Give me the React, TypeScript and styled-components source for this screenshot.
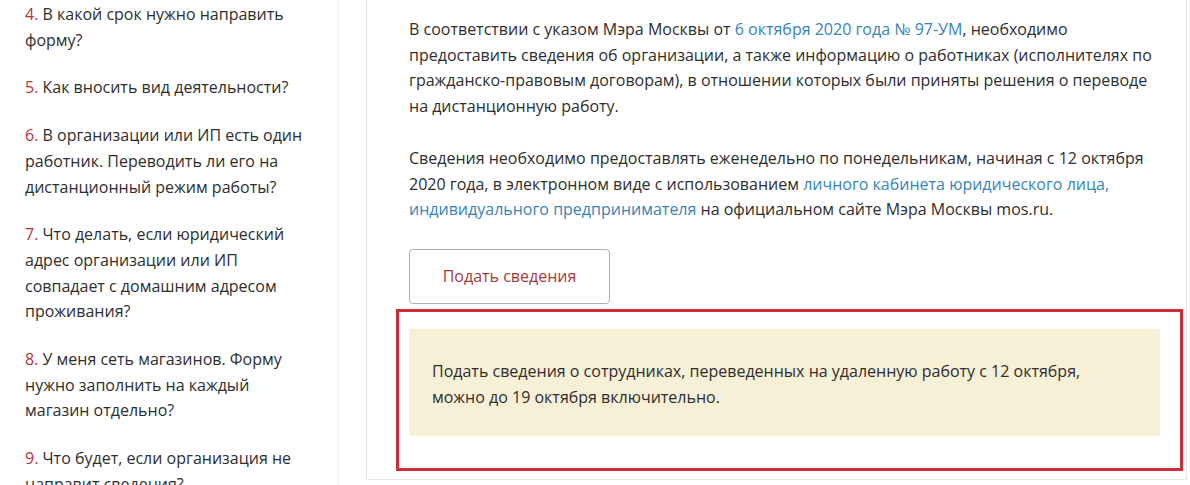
import React from 'react';
import styled, { createGlobalStyle } from 'styled-components';

const GlobalStyle = createGlobalStyle`
  body {
    margin: 0;
    background: #fff;
    font-family: 'Open Sans', 'Liberation Sans', sans-serif;
    color: #2e2e2e;
  }
`;

// Styles
const Page = styled.div`
  display: flex;
  align-items: flex-start;
  height: 485px;
  overflow: hidden;
`;

const Sidebar = styled.aside`
  width: 313px;
  height: 485px;
  padding: 2px 0 0 25px;
  border-right: 1px solid #ececec;
  flex-shrink: 0;
`;

const Question = styled.div`
  width: 285px;
  font-size: 16px;
  line-height: 25.7px;
  margin-bottom: 22px;

  b {
    font-weight: normal;
    color: #b8323a;
  }
`;

const Card = styled.section`
  margin-left: 27px;
  width: 777px;
  padding: 17px 0 0 42px;
  height: 462px;
  border: 1px solid #e6e6e6;
  border-top: none;
`;

const Text = styled.p`
  margin: 0 0 26px;
  width: 755px;
  font-size: 16px;
  line-height: 25.7px;

  a {
    color: #3784b6;
    text-decoration: none;
  }
`;

const Button = styled.button`
  display: block;
  width: 201px;
  height: 55px;
  background: #fff;
  border: 1px solid #b7adad;
  border-radius: 4px;
  font-family: inherit;
  font-size: 16px;
  color: #a33a3a;
`;

const Highlight = styled.div`
  box-sizing: border-box;
  margin: 5px 0 0 -13px;
  width: 787px;
  padding: 17px 0 32px 10px;
  border: 3px solid #c9303a;
`;

const Notice = styled.div`
  box-sizing: border-box;
  width: 751px;
  padding: 30px 60px 26px 23px;
  background: #f7efd6;
  font-size: 16px;
  line-height: 25.7px;
`;

const questions = [
  { n: 4, text: 'В какой срок нужно направить форму?' },
  { n: 5, text: 'Как вносить вид деятельности?' },
  { n: 6, text: 'В организации или ИП есть один работник. Переводить ли его на дистанционный режим работы?' },
  { n: 7, text: 'Что делать, если юридический адрес организации или ИП совпадает с домашним адресом проживания?' },
  { n: 8, text: 'У меня сеть магазинов. Форму нужно заполнить на каждый магазин отдельно?' },
  { n: 9, text: 'Что будет, если организация не направит сведения?' },
];

const App: React.FC = () => {
  return (
    <>
      <GlobalStyle />
      <Page>
        <Sidebar>
          {questions.map((q) => (
            <Question key={q.n}>
              <b>{q.n}.</b> {q.text}
            </Question>
          ))}
        </Sidebar>

        <Card>
          <Text>
            В соответствии с указом Мэра Москвы от{' '}
            <a href="/">6 октября 2020 года № 97-УМ</a>, необходимо предоставить
            сведения об организации, а также информацию о работниках (исполнителях по
            гражданско-правовым договорам), в отношении которых были приняты решения о
            переводе на дистанционную работу.
          </Text>
          <Text>
            Сведения необходимо предоставлять еженедельно по понедельникам, начиная с 12
            октября 2020 года, в электронном виде с использованием{' '}
            <a href="/">личного кабинета юридического лица, индивидуального предпринимателя</a>{' '}
            на официальном сайте Мэра Москвы mos.ru.
          </Text>
          <Button>Подать сведения</Button>
          <Highlight>
            <Notice>
              Подать сведения о сотрудниках, переведенных на удаленную работу с 12 октября,
              можно до 19 октября включительно.
            </Notice>
          </Highlight>
        </Card>
      </Page>
    </>
  );
};

export default App;
